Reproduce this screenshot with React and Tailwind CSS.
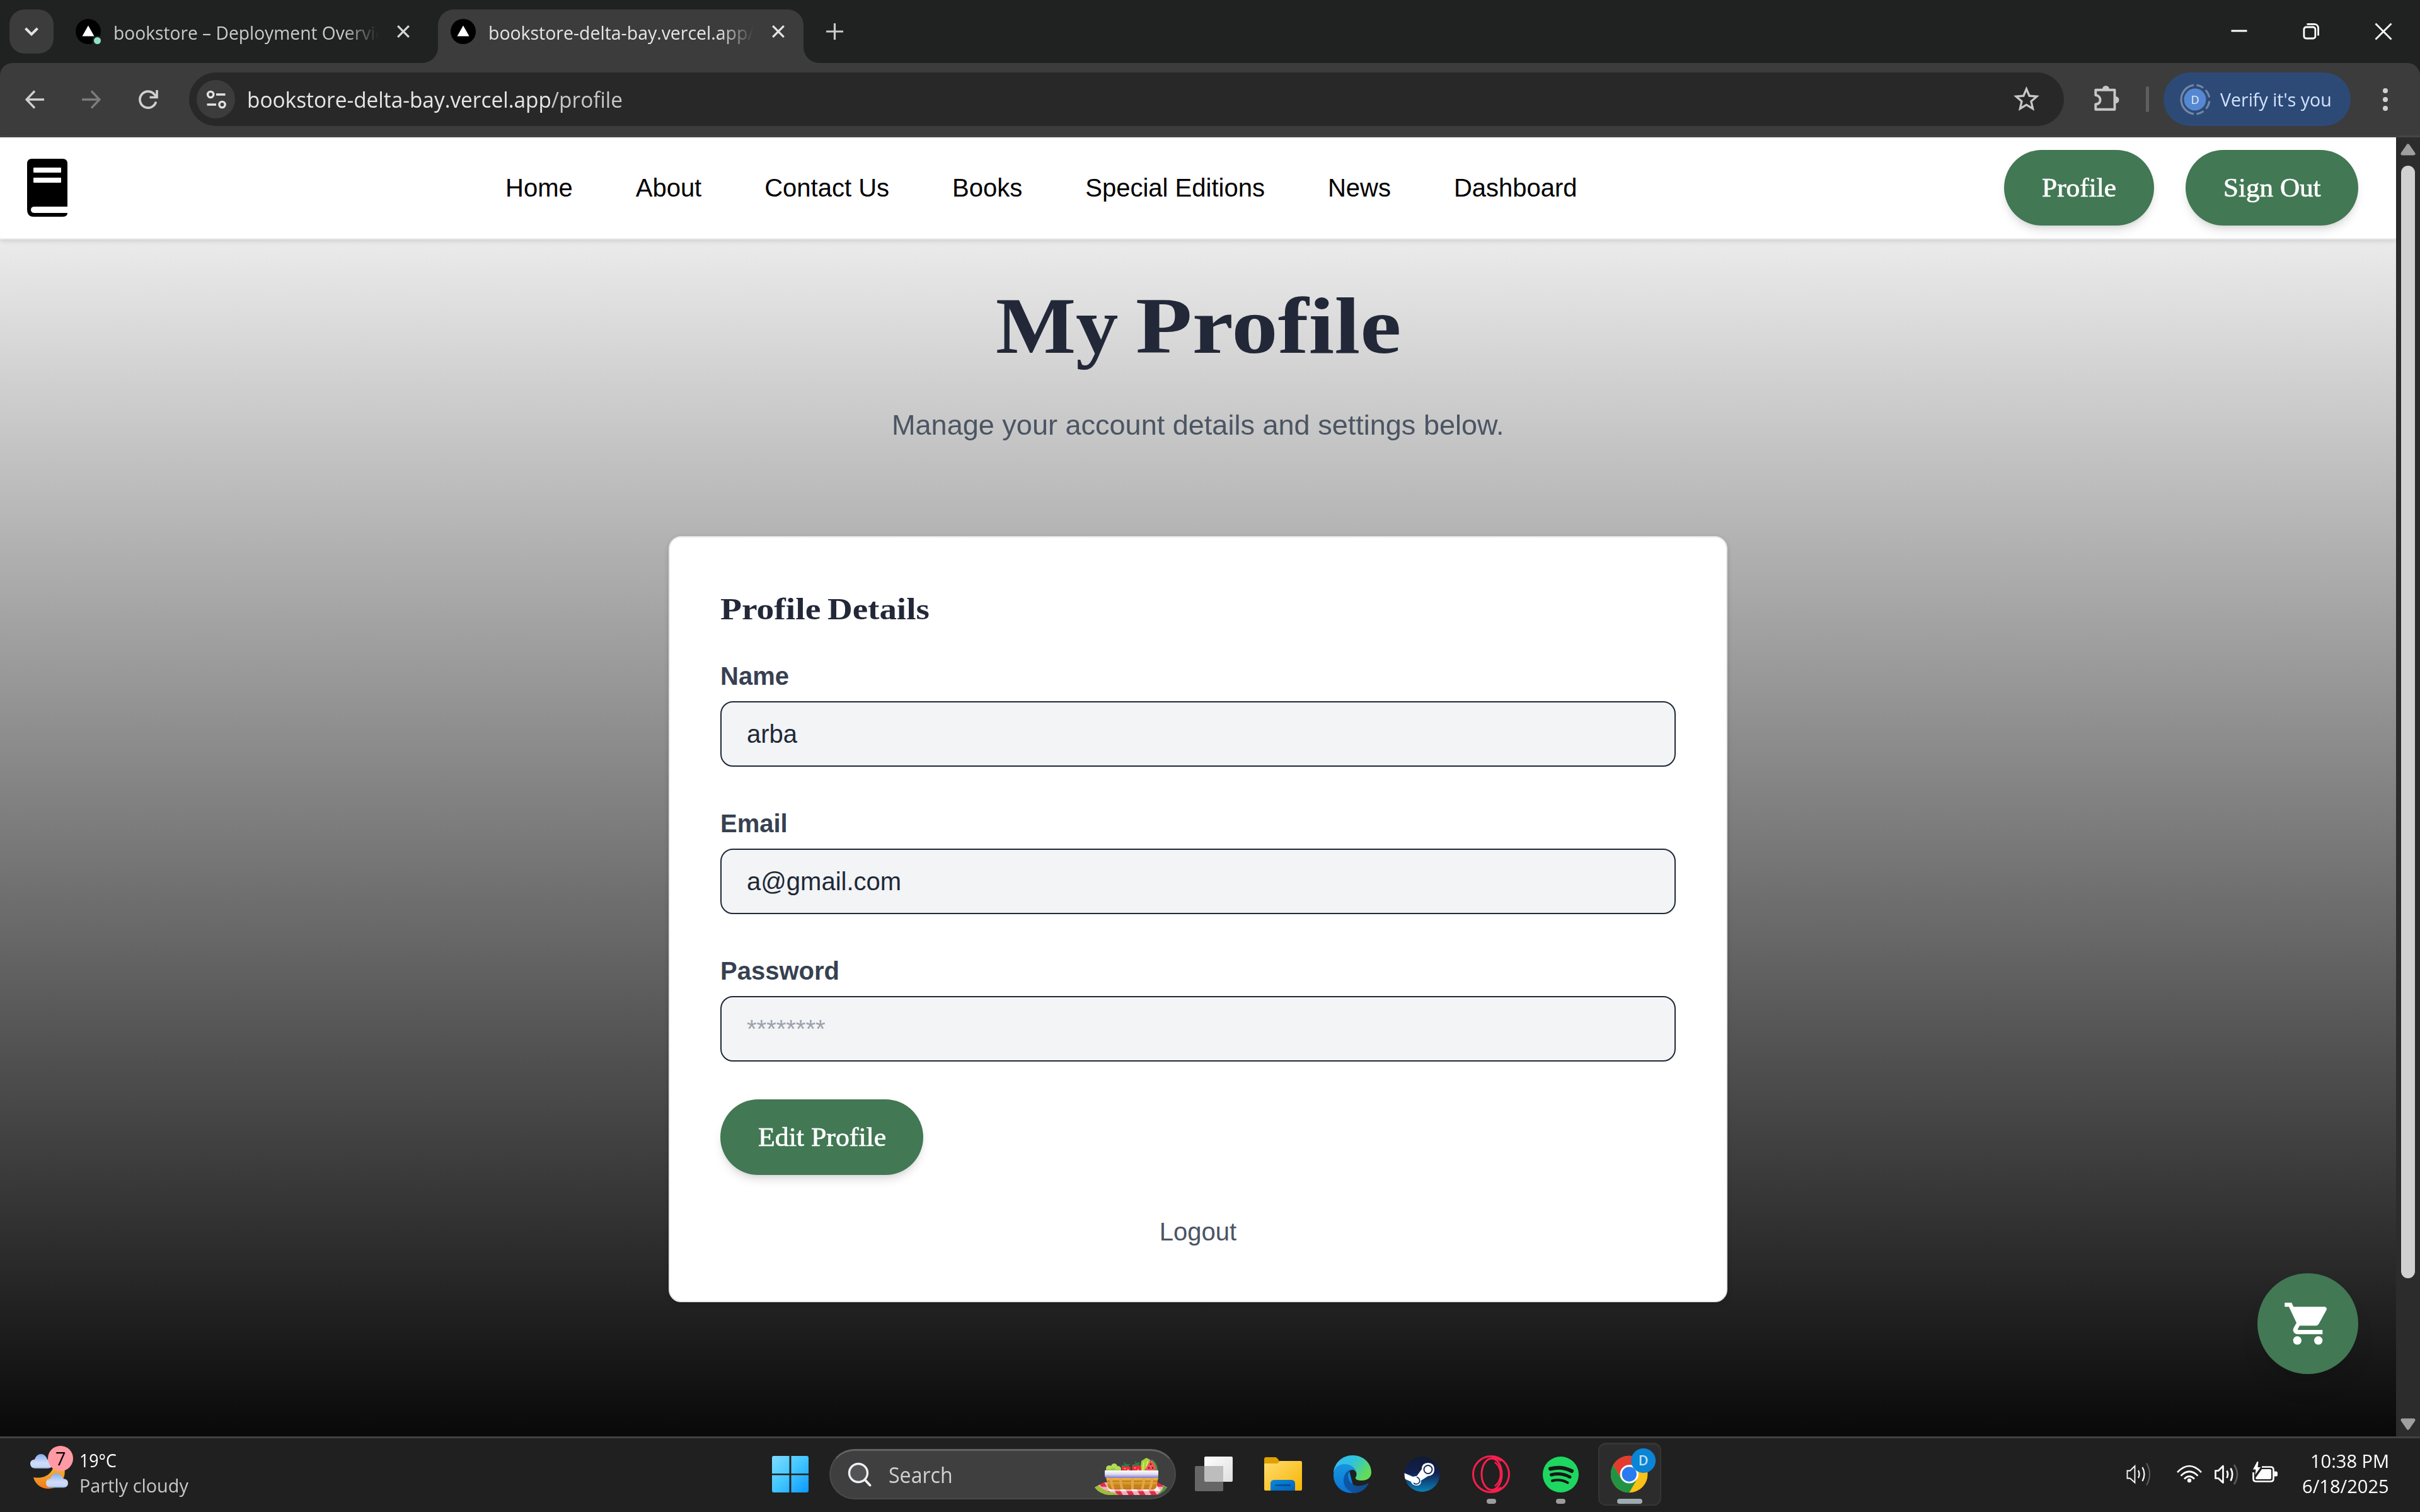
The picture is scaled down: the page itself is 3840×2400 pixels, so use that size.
import React, { useLayoutEffect, useRef, useState } from "react";
import { MdShoppingCart, MdStarBorder } from "react-icons/md";

/* One line of text that is stretched to a given advance width. */
function Fit({ w, children, className = "" }) {
  const ref = useRef(null);
  const [k, setK] = useState(1);
  useLayoutEffect(() => {
    if (ref.current) setK(w / ref.current.offsetWidth);
  }, [w]);
  return (
    <span className={"block whitespace-nowrap " + className} style={{ width: w }}>
      <span ref={ref} className="inline-block origin-left whitespace-nowrap" style={{ transform: `scaleX(${k})` }}>
        {children}
      </span>
    </span>
  );
}

const ui = "font-['Open_Sans','Noto_Sans',sans-serif]";
const serif = "font-['Liberation_Serif',serif]";

function VercelIcon({ dot }) {
  return (
    <svg className="h-10 w-10 shrink-0" viewBox="0 0 40 40">
      <circle cx="20" cy="20" r="20" fill="#000" />
      <path d="M20 10.5L29.5 27.5H10.5Z" fill="#fff" />
      {dot && <circle cx="34.5" cy="34.5" r="8" fill="#202221" />}
      {dot && <circle cx="34.5" cy="34.5" r="5.5" fill="#8fe3c4" />}
    </svg>
  );
}

function CloseIcon({ color }) {
  return (
    <svg className="h-5 w-5 shrink-0" viewBox="0 0 20 20" fill="none" stroke={color} strokeWidth="3.2">
      <path d="M1.2 1.2L18.8 18.8M18.8 1.2L1.2 18.8" />
    </svg>
  );
}

function TabStrip() {
  return (
    <div className="flex h-[100px] items-start bg-[#202221]">
      <button className="mt-[15px] ml-[15px] flex h-[70px] w-[70px] items-center justify-center rounded-[24px] bg-[#3c3c3c]">
        <svg className="h-5 w-6" viewBox="0 0 24 20" fill="none" stroke="#e3e3e3" strokeWidth="4">
          <path d="M2.5 5L12 14.5L21.5 5" />
        </svg>
      </button>
      <div className="ml-[35px] flex h-[100px] w-[530px] items-center">
        <VercelIcon dot />
        <div className="ml-[20px] w-[421px] overflow-hidden pt-[3px] text-[29px] leading-[60px] text-[#c9cac9] [mask-image:linear-gradient(to_right,black_87%,transparent)]">
          <Fit w={453}>bookstore – Deployment Overview</Fit>
        </div>
        <div className="ml-[29px]"><CloseIcon color="#d5d6d5" /></div>
      </div>
      <svg className="mt-[75px] h-[25px] w-[25px] shrink-0 ml-[20px]" viewBox="0 0 25 25">
        <path d="M0 25A25 25 0 0 0 25 0V25Z" fill="#3c3c3c" />
      </svg>
      <div className="mt-[15px] flex h-[85px] w-[580px] shrink-0 items-center rounded-t-[25px] bg-[#3c3c3c] pb-[15px] pl-[20px]">
        <VercelIcon />
        <div className="ml-[20px] w-[421px] overflow-hidden pt-[3px] text-[29px] leading-[60px] text-[#e6e6e6] [mask-image:linear-gradient(to_right,black_87%,transparent)]">
          <Fit w={508}>bookstore-delta-bay.vercel.app/profile</Fit>
        </div>
        <div className="ml-[29px]"><CloseIcon color="#e6e6e6" /></div>
      </div>
      <svg className="mt-[75px] h-[25px] w-[25px] shrink-0" viewBox="0 0 25 25">
        <path d="M0 0A25 25 0 0 0 25 25H0Z" fill="#3c3c3c" />
      </svg>
      <svg className="mt-[37px] ml-[11px] h-[26px] w-[27px]" viewBox="0 0 27 26" stroke="#c9cac9" strokeWidth="3.2">
        <path d="M13.5 0V26M0 13H27" />
      </svg>
      <div className="mt-[36px] mr-[44px] ml-auto flex items-center">
        <svg className="h-[28px] w-[28px]" viewBox="0 0 28 28" stroke="#fff" strokeWidth="3">
          <path d="M1.5 13H26.5" />
        </svg>
        <svg className="ml-[86px] h-[28px] w-[28px]" viewBox="0 0 28 28" fill="none" stroke="#fff" strokeWidth="2.8">
          <rect x="2.9" y="7" width="18" height="18" rx="3.5" />
          <path d="M7.5 2.4H19C23 2.4 25.6 5 25.6 9V20.5" />
        </svg>
        <svg className="ml-[87px] h-[28px] w-[28px]" viewBox="0 0 28 28" stroke="#fff" strokeWidth="2.8">
          <path d="M1.5 1.5L26.5 26.5M26.5 1.5L1.5 26.5" />
        </svg>
      </div>
    </div>
  );
}

function AddressBar() {
  return (
    <div className="bg-[#202221]">
      <div className="flex h-[118px] items-start rounded-t-[20px] border-b-[3px] border-[#454545] bg-[#3c3c3c]">
        <svg className="mt-[43px] ml-[40px] h-[30px] w-[30px]" viewBox="0 0 30 30" fill="none" stroke="#d0d0d0" strokeWidth="3.4">
          <path d="M15 1.5L2 15L15 28.5M2.5 15H30" />
        </svg>
        <svg className="mt-[43px] ml-[60px] h-[30px] w-[30px]" viewBox="0 0 30 30" fill="none" stroke="#7d7d7d" strokeWidth="3.4">
          <path d="M15 1.5L28 15L15 28.5M27.5 15H0" />
        </svg>
        <svg className="mt-[43px] ml-[60px] h-[30px] w-[31px]" viewBox="0 0 31 30" fill="none" stroke="#d0d0d0" strokeWidth="3.6">
          <path d="M27.500 18.500A13 13 0 1 1 25.500 7.500L28.500 11" />
          <path d="M29 0V11.500H17.500" />
        </svg>
        <div className="mt-[15px] ml-[49px] flex h-[85px] w-[2975px] shrink-0 items-center rounded-full bg-[#282828] pr-[35px] pl-[12px]">
          <div className="flex h-[61px] w-[61px] items-center justify-center rounded-full bg-[#3c3c3c]">
            <svg className="h-[30px] w-[32px]" viewBox="0 0 32 30" fill="none" stroke="#e3e3e3" strokeWidth="3.4">
              <circle cx="7.2" cy="7" r="4.6" />
              <path d="M16 7H30.5M1.5 23H16" />
              <circle cx="25.5" cy="23" r="4.6" />
            </svg>
          </div>
          <div className="ml-[19px] text-[34px] leading-[60px] text-[#e6e6e6]">
            <Fit w={596}>bookstore-delta-bay.vercel.app<span className="text-[#c7c7c7]">/profile</span></Fit>
          </div>
          <MdStarBorder className="ml-auto h-[49px] w-[49px] text-[#c7c7c7]" />
        </div>
        <svg className="mt-[33px] ml-[46px] h-[44px] w-[44px] shrink-0" viewBox="0 0 44 44">
          <path d="M15 8.5a5.500 5.500 0 0 1 11 0M36 20a5.500 5.500 0 0 1 0 11" fill="#c7c7c7" />
          <path d="M4.300 9.700H34.500V40.800H4.300V32.500C11 32 12 27 11.500 25C11.500 22 9 18.300 4.300 18Z" fill="none" stroke="#c7c7c7" strokeWidth="3.900" strokeLinejoin="round" />
        </svg>
        <div className="mt-[37px] ml-[40px] h-[41px] w-[5px] shrink-0 rounded-full bg-[#5f5f5f]" />
        <div className="mt-[15px] ml-[23px] flex h-[85px] w-[297px] shrink-0 items-center rounded-full bg-[#2d4a77] pl-[25px]">
          <svg className="h-[50px] w-[50px]" viewBox="0 0 50 50">
            <path d="M23 2.200A23 23 0 0 0 23 47.800" fill="none" stroke="#7487a5" strokeWidth="3.200" />
            <path d="M27.500 2.200A23 23 0 0 1 38 6.200M41.800 10A23 23 0 0 1 47.600 21.500M47.800 27.500A23 23 0 0 1 42.500 39.500M38.500 43.500A23 23 0 0 1 27.500 47.800" fill="none" stroke="#7487a5" strokeWidth="3.200" />
            <circle cx="25" cy="25" r="17.500" fill="#5588d0" />
            <text x="25" y="31.500" textAnchor="middle" fontSize="18" fontFamily="Open Sans" fill="#e8f0ff">D</text>
          </svg>
          <div className="ml-[15px] text-[29px] leading-[60px] text-[#d3e3fd]"><Fit w={177}>Verify it's you</Fit></div>
        </div>
        <svg className="mt-[39px] ml-[51px] h-[38px] w-[8px] shrink-0" viewBox="0 0 8 38" fill="#d0d0d0">
          <circle cx="4" cy="5" r="4" /><circle cx="4" cy="19" r="4" /><circle cx="4" cy="33" r="4" />
        </svg>
      </div>
    </div>
  );
}

function GreenButton({ w, tw, children }) {
  return (
    <button
      className={"flex h-[120px] shrink-0 items-center justify-center rounded-full bg-[#427854] text-[42.3px] text-white [-webkit-text-stroke:0.7px_white] shadow-[0_10px_15px_-2.5px_rgba(0,0,0,0.12),0_5px_10px_-5px_rgba(0,0,0,0.1)] " + serif}
      style={{ width: w }}
    >
      <Fit w={tw} className="text-left">{children}</Fit>
    </button>
  );
}

const links = ["Home", "About", "Contact Us", "Books", "Special Editions", "News", "Dashboard"];

function SiteHeader() {
  return (
    <header className="relative flex h-[162px] shrink-0 items-center border-b-2 border-[#eeeeee] bg-white pr-[60px] shadow-[0_2px_8px_rgba(0,0,0,0.14)]">
      <svg className="ml-[43px] h-[92px] w-[64px] shrink-0" viewBox="0 0 64 92">
        <path d="M8 0H56Q64 0 64 8V76H12Q6 76 6 81Q6 86 12 86H64Q64 92 56 92H10Q0 92 0 80V8Q0 0 8 0Z" fill="#000" />
        <rect x="10" y="14" width="44" height="8" rx="1" fill="#fff" />
        <rect x="10" y="30" width="44" height="8" rx="1" fill="#fff" />
      </svg>
      <nav className="ml-[695px] flex gap-[100px] text-[40px] whitespace-nowrap text-black">
        {links.map((l) => <a key={l}>{l}</a>)}
      </nav>
      <div className="ml-auto flex gap-[50px]">
        <GreenButton w={238} tw={118}>Profile</GreenButton>
        <GreenButton w={274} tw={155}>Sign Out</GreenButton>
      </div>
    </header>
  );
}

function Field({ label, value, muted, first }) {
  return (
    <div className={first ? "mt-[46px]" : "mt-[60px]"}>
      <div className="text-[40px] leading-[60px] font-bold text-[#374151]">{label}</div>
      <div className={"mt-[10px] flex h-[104px] items-center rounded-[20px] border-2 border-[#1f2937] bg-[#f3f4f6] px-[40px] text-[40px] " + (muted ? "text-[#9ca3af]" : "text-[#1f2937]")}>
        {value}
      </div>
    </div>
  );
}

function ProfilePage() {
  return (
    <main className="relative flex grow flex-col items-center bg-[linear-gradient(to_bottom,#ebebeb,#090909)]">
      <h1 className={"mt-[77px] flex gap-[28px] text-[127px] leading-[120px] font-bold text-[#222838] " + serif}>
        <Fit w={194}>My</Fit>
        <Fit w={421}>Profile</Fit>
      </h1>
      <p className="mt-[68px] text-[45px] leading-[60px] text-[#4b5563]"><Fit w={972}>Manage your account details and settings below.</Fit></p>
      <section className="mt-[146px] flex h-[1216px] w-[1680px] flex-col rounded-[20px] border-2 border-[#e5e7eb] bg-white px-[80px] pt-[84px] shadow-[0_3px_8px_rgba(0,0,0,0.15)]">
        <h2 className={"flex gap-[11px] text-[47.500px] leading-[60px] font-bold text-[#222838] " + serif}>
          <Fit w={159}>Profile</Fit>
          <Fit w={162}>Details</Fit>
        </h2>
        <Field label="Name" value="arba" first />
        <Field label="Email" value="a@gmail.com" />
        <Field label="Password" value="********" muted />
        <div className="mt-[60px] flex"><GreenButton w={322} tw={203}>Edit Profile</GreenButton></div>
        <a className="mt-[60px] text-center text-[40px] leading-[60px] text-[#4b5563]">Logout</a>
      </section>
      <button className="absolute right-[60px] bottom-[99px] flex h-[160px] w-[160px] items-center justify-center rounded-full bg-[#427854] shadow-[0_25px_38px_-8px_rgba(0,0,0,0.1)]">
        <MdShoppingCart className="h-20 w-20 text-white" />
      </button>
    </main>
  );
}

function Scrollbar() {
  return (
    <div className="flex w-[38px] shrink-0 flex-col items-center bg-[#2c2c2c]">
      <svg className="mt-[10px] h-[19px] w-[24px]" viewBox="0 0 24 19">
        <path d="M12 3L21 16H3Z" fill="#9f9f9f" stroke="#9f9f9f" strokeWidth="5" strokeLinejoin="round" />
      </svg>
      <div className="mt-[16px] h-[1766px] w-[22px] rounded-full bg-[#d1d1d1]" />
      <svg className="mt-auto mb-[10px] h-[19px] w-[24px]" viewBox="0 0 24 19">
        <path d="M12 16L21 3H3Z" fill="#9f9f9f" stroke="#9f9f9f" strokeWidth="5" strokeLinejoin="round" />
      </svg>
    </div>
  );
}

function WeatherIcon() {
  const cloud = "M8 23Q0 22 0 15.500Q0 9 7 8.500Q10 0 17 0Q24 0 27 8.500Q35 9 35 15.500Q35 22 28 23Z";
  return (
    <svg className="h-[72px] w-[70px]" viewBox="0 0 70 72">
      <defs>
        <linearGradient id="cl" x1="0" y1="0" x2="0" y2="1"><stop offset="0" stopColor="#86aaf0" /><stop offset=".6" stopColor="#cfdcf8" /><stop offset=".9" stopColor="#c3d6f6" /><stop offset="1" stopColor="#7390cc" /></linearGradient>
        <linearGradient id="mn" x1="0" y1="0" x2="0" y2="1"><stop offset="0" stopColor="#f5c034" /><stop offset="1" stopColor="#f07a1c" /></linearGradient>
      </defs>
      <path d="M5 52C22 55 36 47 38 30L54 36C58 54 46 70 29 70C17 70 8 63 5 52Z" fill="url(#mn)" />
      <path d={cloud} transform="translate(0 15)" fill="url(#cl)" />
      <path d={cloud} transform="translate(25 45.500)" fill="url(#cl)" />
      <circle cx="48" cy="22" r="20" fill="#ff9aa5" />
      <text x="48" y="33" textAnchor="middle" fontSize="29" fontFamily="Open Sans" fill="#000">7</text>
    </svg>
  );
}

function WindowsLogo() {
  return (
    <svg className="h-[58px] w-[58px]" viewBox="0 0 58 58">
      <defs>
        <linearGradient id="wn" x1="0" y1="0" x2="1" y2="1"><stop offset="0" stopColor="#80dcff" /><stop offset=".5" stopColor="#41c6ff" /><stop offset="1" stopColor="#0b98ff" /></linearGradient>
        <clipPath id="wc"><path d="M3 0H27.500V28H0V3Q0 0 3 0ZM30.500 0H55Q58 0 58 3V28H30.500ZM0 30.500H27.500V58H3Q0 58 0 55ZM30.500 30.500H58V55Q58 58 55 58H30.500Z" /></clipPath>
      </defs>
      <rect width="58" height="58" fill="url(#wn)" clipPath="url(#wc)" />
    </svg>
  );
}

function Basket() {
  return (
    <svg className="h-[64px] w-[116px] shrink-0" viewBox="0 0 116 64">
      <defs>
        <linearGradient id="bk" x1="0" y1="0" x2="0" y2="1"><stop offset="0" stopColor="#f0b64a" /><stop offset="1" stopColor="#b97711" /></linearGradient>
        <linearGradient id="rm" x1="0" y1="0" x2="0" y2="1"><stop offset="0" stopColor="#fff" /><stop offset=".5" stopColor="#dddcf2" /><stop offset="1" stopColor="#8077cc" /></linearGradient>
        <pattern id="ck" width="18" height="14" patternUnits="userSpaceOnUse" patternTransform="skewX(30)">
          <rect width="18" height="14" fill="#f4b0ba" /><rect width="9" height="7" fill="#e32c45" /><rect x="9" y="7" width="9" height="7" fill="#fdeff0" />
        </pattern>
      </defs>
      <path d="M0 50L14 42H100L115 50Q105 62 96 62H22Q8 60 0 50Z" fill="url(#ck)" />
      <path d="M0 50L6 47Q18 58 36 60L38 62H22Q8 60 0 50Z" fill="#9bbf35" />
      <path d="M115 50L109 48Q108 56 99 61Q110 59 115 50Z" fill="#4f9c35" />
      <g fill="#b6d957"><circle cx="23" cy="20" r="5" /><circle cx="31" cy="17" r="5" /><circle cx="37" cy="21" r="5" /></g>
      <g fill="#9cc83f"><circle cx="21" cy="25" r="4" /><circle cx="29" cy="24" r="5" /><circle cx="37" cy="26" r="4" /></g>
      <path d="M72 26L74 8L82 3L88 6L84 28Z" fill="#a5d63a" />
      <path d="M76 26L78 10M81 24L84 8" stroke="#d9f07c" strokeWidth="1.500" />
      <path d="M43 16Q52 12 57 19Q58 26 54 28H46Q42 22 43 16ZM60 14Q70 10 74 18Q74 26 70 28H62Q58 20 60 14Z" fill="#ee2c40" />
      <g fill="#ffd65c"><circle cx="48" cy="20" r="1" /><circle cx="53" cy="22" r="1" /><circle cx="64" cy="19" r="1" /><circle cx="69" cy="22" r="1" /><circle cx="64" cy="25" r="1" /></g>
      <path d="M41 15L47 14L46 9L50 13L57 13L52 17L46 17ZM59 14L65 13L63 8L67 11L72 10L70 15L63 16Z" fill="#258045" />
      <path d="M90 5Q101 12 100 28H96Z" fill="#4d9a3c" /><path d="M89 6Q98 14 97 28H76Z" fill="#f4545a" />
      <g fill="#451518"><circle cx="89" cy="13" r="1.200" /><circle cx="86" cy="19" r="1.200" /><circle cx="92" cy="19" r="1.200" /><circle cx="88" cy="24" r="1.200" /></g>
      <path d="M18 34H101L98 49Q97 53 92 53H28Q22 53 21 49Z" fill="url(#bk)" />
      <path d="M19 40H100M21 47H98" stroke="#c47f13" strokeWidth="2" />
      <path d="M26 34Q26 46 30 53M41 34Q41 46 44 53M60 34V53M78 34Q78 46 75 53M91 34Q91 46 87 53" stroke="#e3a548" strokeWidth="4" fill="none" />
      <path d="M16 23H101V31Q101 35 97 35H20Q16 35 16 31Z" fill="url(#rm)" />
    </svg>
  );
}

function TaskView() {
  return (
    <svg className="h-[56px] w-[60px]" viewBox="0 0 60 56">
      <defs><linearGradient id="tv" x1="0" y1="0" x2="1" y2="1"><stop offset="0" stopColor="#fff" /><stop offset="1" stopColor="#dedede" /></linearGradient></defs>
      <rect x="15" y="0" width="45" height="40" rx="2" fill="url(#tv)" />
      <rect x="0" y="15" width="45" height="40" rx="2" fill="#666" />
      <path d="M15 15H45V40H17Q15 40 15 38Z" fill="#bdbdbd" />
    </svg>
  );
}

function Folder() {
  return (
    <svg className="h-[54px] w-[60px]" viewBox="0 0 60 54">
      <defs>
        <linearGradient id="fo" x1="0" y1="0" x2="1" y2="1"><stop offset="0" stopColor="#ffdc70" /><stop offset="1" stopColor="#f8b500" /></linearGradient>
        <linearGradient id="fb" x1="0" y1="0" x2="1" y2="1"><stop offset="0" stopColor="#0a8adc" /><stop offset="1" stopColor="#0560b8" /></linearGradient>
      </defs>
      <path d="M0 3Q0 0 3 0H18Q20 0 24 6H40V14H0Z" fill="#dfa000" />
      <path d="M0 10H21L25 6H58Q60 6 60 9V51Q60 53 58 53H2Q0 53 0 51Z" fill="url(#fo)" />
      <path d="M10 53V42Q10 36 16 36H43Q49 36 49 42V53Z" fill="url(#fb)" />
      <path d="M17.500 44.500H42" stroke="#074a92" strokeWidth="2.400" />
    </svg>
  );
}

function Edge() {
  return (
    <svg className="h-[60px] w-[60px]" viewBox="0 0 60 60">
      <defs>
        <linearGradient id="e1" x1="0" y1="0" x2="1" y2=".5"><stop offset="0" stopColor="#39b9f8" /><stop offset=".5" stopColor="#2fc2df" /><stop offset="1" stopColor="#62dc58" /></linearGradient>
        <linearGradient id="e2" x1="0" y1="0" x2="0" y2="1"><stop offset="0" stopColor="#1795de" /><stop offset="1" stopColor="#0a74d4" /></linearGradient>
        <linearGradient id="e3" x1="0" y1="0" x2="1" y2="0"><stop offset="0" stopColor="#0c58a8" /><stop offset="1" stopColor="#114a8b" /></linearGradient>
      </defs>
      <path d="M0 28C1 12 14 0 30 0C48 0 60 13 60 27C60 36 53 40 45 40C38 40 34 38 35 35C38 32 37 23 29 19C18 12 4 16 0 28Z" fill="url(#e1)" />
      <path d="M0 30C1 18 9 14 18 14C27 14 35 20 36 27C33 22 28 22 25 25L34 59C15 63 -1 48 0 30Z" fill="url(#e2)" />
      <path d="M27 23C21 29 22 39 29 45C36 51 46 49 55 44Q56 44 55 46C50 55 41 60 33 60C21 57 15 47 16 38C17 30 21 25 27 23Z" fill="url(#e3)" />
    </svg>
  );
}

function Steam() {
  return (
    <svg className="h-[57px] w-[57px]" viewBox="0 0 57 57">
      <defs>
        <linearGradient id="st" x1="0" y1="0" x2="0" y2="1"><stop offset="0" stopColor="#0e1c35" /><stop offset=".45" stopColor="#131f50" /><stop offset="1" stopColor="#0a86bd" /></linearGradient>
        <clipPath id="sc"><circle cx="28.500" cy="28" r="28" /></clipPath>
      </defs>
      <g clipPath="url(#sc)">
        <rect width="57" height="57" fill="url(#st)" />
        <path d="M0 26L14 32Q18 31 20 31L28 20Q28 10 38 10Q48 10 48 20.500Q48 30 38 31L27 38Q27 47 19 46Q12 45 11 40L0 35Z" fill="#fff" />
        <circle cx="38" cy="20.500" r="6.500" fill="none" stroke="#15264f" strokeWidth="2" />
        <path d="M15 42Q21 46 24.500 40.500Q26 35 20 32.500" fill="none" stroke="#13386b" strokeWidth="1.800" />
      </g>
    </svg>
  );
}

function Opera() {
  return (
    <svg className="h-[60px] w-[60px]" viewBox="0 0 60 60" fill="none" stroke="#fa1e4e">
      <circle cx="30" cy="30" r="28.500" strokeWidth="3" />
      <ellipse cx="31" cy="30" rx="16" ry="25" strokeWidth="3" />
      <path d="M30 3Q40 4 46 9M30 57Q40 56 46 51" strokeWidth="3" />
      <path d="M36 11Q45 18 45 30Q45 42 36 49" strokeWidth="2.400" />
    </svg>
  );
}

function Spotify() {
  return (
    <svg className="h-[57px] w-[57px]" viewBox="0 0 57 57" fill="none" stroke="#171717" strokeLinecap="round">
      <circle cx="28.500" cy="28.500" r="28.500" fill="#1ed760" stroke="none" />
      <path d="M12 19.500Q30 14.500 46 23" strokeWidth="6" /><path d="M13.500 29Q29 25 43 32.500" strokeWidth="5" /><path d="M15 38.500Q28 35 39.500 41.500" strokeWidth="4" />
    </svg>
  );
}

function Chrome() {
  return (
    <svg className="h-[80px] w-[80px]" viewBox="0 0 80 80">
      <g transform="translate(0 12)">
        <circle cx="30" cy="30" r="30" fill="#fbc116" />
        <path d="M4 15A30 30 0 0 1 56 15H30L17 37.500Z" fill="#e33b2e" />
        <path d="M4 15A30 30 0 0 0 30 60L43 37.500H17Z" fill="#229342" />
        <circle cx="30" cy="30" r="15" fill="#fff" />
        <circle cx="30" cy="30" r="12" fill="#2a7bf0" />
      </g>
      <circle cx="53" cy="20" r="20" fill="#0a84d4" />
      <text x="53" y="28" textAnchor="middle" fontSize="22" fontFamily="Open Sans" fontWeight="600" fill="#bfe0f7">D</text>
    </svg>
  );
}

function Slot({ children, running }) {
  return (
    <div className="relative flex h-[110px] w-[110px] shrink-0 items-center justify-center">
      {children}
      {running && <div className="absolute bottom-[8px] h-[8px] w-[15px] rounded-full bg-[#9c9c9c]" />}
    </div>
  );
}

function Speaker({ bold }) {
  return (
    <svg className="h-10 w-10" viewBox="0 0 40 40" fill="none" stroke="#fff" strokeWidth={bold ? 2.7 : 2.2}>
      <path d="M1.500 14.500H6L13.500 7V33.500L6 26.500H1.500Z" strokeLinejoin={bold ? "round" : "miter"} strokeWidth={bold ? 2.7 : 1.8} />
      <path d={bold ? "M19.500 14.500Q22.500 20 19.500 26M25.500 10.500Q31 20 25.500 30.500" : "M19 14Q22 20 19 26M25.500 9Q31.500 20 25.500 31"} />
      <path d={bold ? "M31 5Q41 20 31 36" : "M32 2.500Q42 20 32 37.500"} stroke="#5a5a5a" />
    </svg>
  );
}

function Taskbar() {
  return (
    <footer className="flex h-[120px] shrink-0 items-center border-t-[3px] border-[#424242] bg-[#202020] pb-[3px]">
      <div className="ml-[48px] flex h-[80px] w-[1151px] items-start">
        <div className="-mt-[7px]"><WeatherIcon /></div>
        <div className="-mt-[2px] ml-[8px] text-[29.500px] leading-[40px]">
          <div className="text-white"><Fit w={59}>19°C</Fit></div>
          <div className="text-[#c8c8c8]"><Fit w={173}>Partly cloudy</Fit></div>
        </div>
      </div>
      <Slot><WindowsLogo /></Slot>
      <div className="mr-[5px] ml-[7px] flex h-[80px] w-[550px] shrink-0 items-center rounded-full border-2 border-t-[3px] border-[#4a4a4a] border-t-[#636363] bg-[#3f3f3f] pl-[27px]">
        <svg className="h-[40px] w-[40px]" viewBox="0 0 40 40" fill="none" stroke="#eef1f4" strokeLinecap="round">
          <circle cx="17" cy="17" r="14.500" fill="#545454" strokeWidth="3.400" /><path d="M27.500 28L35.500 36.500" strokeWidth="4" />
        </svg>
        <div className="ml-[25px] text-[34px] leading-[60px] text-[#d2d2d2]"><Fit w={102}>Search</Fit></div>
        <div className="mr-[11px] ml-auto pt-1"><Basket /></div>
      </div>
      <Slot><TaskView /></Slot>
      <Slot><Folder /></Slot>
      <Slot><Edge /></Slot>
      <Slot><Steam /></Slot>
      <Slot running><Opera /></Slot>
      <Slot running><Spotify /></Slot>
      <div className="relative ml-[5px] flex h-[100px] w-[100px] shrink-0 items-start rounded-[12px] border-2 border-t-[3px] border-[#363636] bg-[#2c2c2c] pt-[5px] pl-[18px]">
        <Chrome />
        <div className="absolute bottom-[1px] left-[28px] h-[8px] w-[40px] rounded-full bg-[#9eabb0]" />
      </div>
      <div className="mr-[49px] ml-auto flex items-center text-white">
        <Speaker />
        <svg className="ml-[40px] h-10 w-10" viewBox="0 0 40 40" fill="none" stroke="#fff" strokeWidth="2.700">
          <path d="M1 17Q20 -3 39 17M6.500 22.500Q20 9 33.500 22.500M12 27.500Q20 19.500 28 27.500" /><circle cx="20" cy="30" r="3.200" fill="#fff" stroke="none" />
        </svg>
        <div className="ml-[20px]"><Speaker bold /></div>
        <svg className="ml-[20px] h-10 w-10" viewBox="0 0 40 40">
          <path d="M15 8.500H29Q33.500 8.500 33.500 13V27Q33.500 31.500 29 31.500H6Q1.500 31.500 1.500 27V17" fill="none" stroke="#fff" strokeWidth="2.700" />
          <path d="M35 15.500H37.500Q40 15.500 40 18V21Q40 23.500 37.500 23.500H35Z" fill="#fff" />
          <path d="M15 12H28Q30 12 30 14V26Q30 28 28 28H7Q5 28 5 26Z" fill="#fff" />
          <path d="M7.500 0L1 12.500H5.500L4.500 21L13 9H8.500L9.500 0Z" fill="#fff" stroke="#202020" strokeWidth="1.500" paintOrder="stroke" />
        </svg>
        <div className="-mt-[3px] ml-[39px] flex flex-col items-end text-[29.500px] leading-[40px]">
          <Fit w={125}>10:38 PM</Fit>
          <Fit w={138}>6/18/2025</Fit>
        </div>
      </div>
    </footer>
  );
}

export default function App() {
  return (
    <div className={"flex h-[2400px] w-[3840px] flex-col overflow-hidden " + ui}>
      <TabStrip />
      <AddressBar />
      <div className="flex grow font-['Liberation_Sans',sans-serif]">
        <div className="relative flex w-[3802px] shrink-0 flex-col">
          <div className="relative z-10 flex flex-col"><SiteHeader /></div>
          <ProfilePage />
        </div>
        <Scrollbar />
      </div>
      <Taskbar />
    </div>
  );
}
